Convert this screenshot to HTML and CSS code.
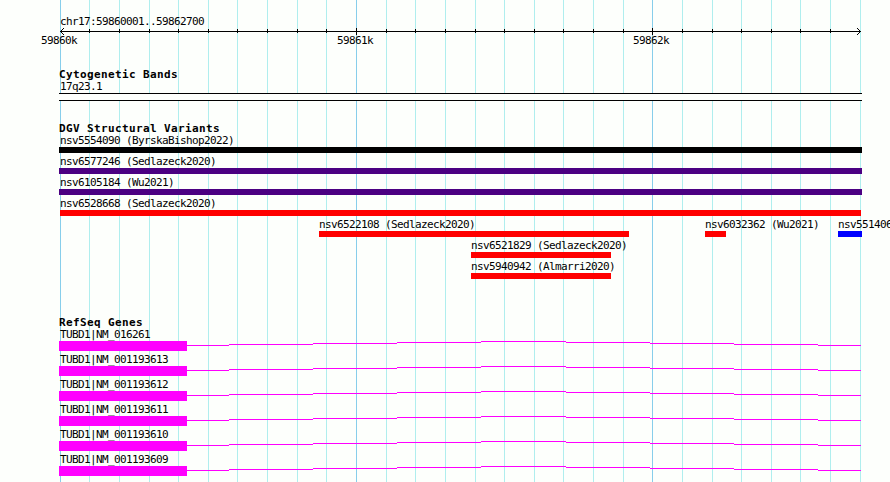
FILE: index.html
```
<!DOCTYPE html>
<html>
<head>
  <meta charset="utf-8">
  <title>chr17:59860001..59862700</title>
  <link rel="stylesheet" href="styles.css">
</head>
<body>

<div class="browser">

  <!-- Vertical grid -->
  <svg class="gridlines" width="890" height="482" shape-rendering="crispEdges">
    <path class="minor" d="M89.5 0v482M119.5 0v482M149.5 0v482M178.5 0v482M208.5 0v482M237.5 0v482M267.5 0v482M297.5 0v482M326.5 0v482M386.5 0v482M415.5 0v482M445.5 0v482M475.5 0v482M504.5 0v482M534.5 0v482M563.5 0v482M593.5 0v482M623.5 0v482M682.5 0v482M712.5 0v482M741.5 0v482M771.5 0v482M800.5 0v482M830.5 0v482M860.5 0v482"/>
    <path class="major" d="M60.5 0v482M356.5 0v482M652.5 0v482"/>
  </svg>

  <header class="ruler">
    <div class="label">chr17:59860001..59862700</div>
    <svg class="axis" width="890" height="8" shape-rendering="crispEdges">
      <path d="M60 3.5h801M89.5 1v4M119.5 1v4M149.5 1v4M178.5 1v4M208.5 1v4M237.5 1v4M267.5 1v4M297.5 1v4M326.5 1v4M386.5 1v4M415.5 1v4M445.5 1v4M475.5 1v4M504.5 1v4M534.5 1v4M563.5 1v4M593.5 1v4M623.5 1v4M682.5 1v4M712.5 1v4M741.5 1v4M771.5 1v4M800.5 1v4M830.5 1v4M356.5 0v7M652.5 0v7"/>
      <path d="M61 2.5h1M62 1.5h1M63 .5h1M61 4.5h1M62 5.5h1M63 6.5h1M859 2.5h1M858 1.5h1M857 .5h1M859 4.5h1M858 5.5h1M857 6.5h1"/>
    </svg>
    <div class="scale">
      <span>59860k</span>
      <span>59861k</span>
      <span>59862k</span>
    </div>
  </header>

  <section class="track bands">
    <h2>Cytogenetic Bands</h2>
    <div class="label">17q23.1</div>
    <div class="band"></div>
  </section>

  <section class="track variants">
    <h2>DGV Structural Variants</h2>
    <div class="row">
      <div class="feature full"><div class="label">nsv5554090 (ByrskaBishop2022)</div><div class="bar black"></div></div>
    </div>
    <div class="row">
      <div class="feature full"><div class="label">nsv6577246 (Sedlazeck2020)</div><div class="bar purple"></div></div>
    </div>
    <div class="row">
      <div class="feature full"><div class="label">nsv6105184 (Wu2021)</div><div class="bar purple"></div></div>
    </div>
    <div class="row">
      <div class="feature inner"><div class="label">nsv6528668 (Sedlazeck2020)</div><div class="bar red"></div></div>
    </div>
    <div class="row">
      <div class="feature" style="margin-left: 319px; width: 310px"><div class="label">nsv6522108 (Sedlazeck2020)</div><div class="bar red"></div></div>
      <div class="feature" style="margin-left: 76px; width: 21px"><div class="label">nsv6032362 (Wu2021)</div><div class="bar red"></div></div>
      <div class="feature" style="margin-left: 112px; width: 24px"><div class="label">nsv551406</div><div class="bar blue"></div></div>
    </div>
    <div class="row">
      <div class="feature" style="margin-left: 471px; width: 140px"><div class="label">nsv6521829 (Sedlazeck2020)</div><div class="bar red"></div></div>
    </div>
    <div class="row">
      <div class="feature" style="margin-left: 471px; width: 140px"><div class="label">nsv5940942 (Almarri2020)</div><div class="bar red"></div></div>
    </div>
  </section>

  <!-- Stepped intron line, shared by all transcripts -->
  <svg class="defs" width="0" height="0">
    <path id="intron" d="M0 4.5h42M42 3.5h84M126 2.5h84M210 1.5h84M294 .5h85M379 1.5h84M463 2.5h84M547 3.5h84M631 4.5h43"/>
  </svg>

  <section class="track genes">
    <h2>RefSeq Genes</h2>
    <div class="gene">
      <div class="label">TUBD1|NM_016261</div>
      <div class="model"><div class="exon"></div><svg class="intron" width="674" height="10"><use href="#intron"/></svg></div>
    </div>
    <div class="gene">
      <div class="label">TUBD1|NM_001193613</div>
      <div class="model"><div class="exon"></div><svg class="intron" width="674" height="10"><use href="#intron"/></svg></div>
    </div>
    <div class="gene">
      <div class="label">TUBD1|NM_001193612</div>
      <div class="model"><div class="exon"></div><svg class="intron" width="674" height="10"><use href="#intron"/></svg></div>
    </div>
    <div class="gene">
      <div class="label">TUBD1|NM_001193611</div>
      <div class="model"><div class="exon"></div><svg class="intron" width="674" height="10"><use href="#intron"/></svg></div>
    </div>
    <div class="gene">
      <div class="label">TUBD1|NM_001193610</div>
      <div class="model"><div class="exon"></div><svg class="intron" width="674" height="10"><use href="#intron"/></svg></div>
    </div>
    <div class="gene">
      <div class="label">TUBD1|NM_001193609</div>
      <div class="model"><div class="exon"></div><svg class="intron" width="674" height="10"><use href="#intron"/></svg></div>
    </div>
  </section>

</div>

</body>
</html>
```
FILE: styles.css
```
body {
  margin: 0;
  background: #fdfffc;
  color: #000;
  font-family: "DejaVu Sans Mono", "Liberation Mono", monospace;
  font-size: 11px;
  letter-spacing: -0.62px;
}

.browser {
  position: relative;
  width: 890px;
  height: 482px;
  overflow: hidden;
}

/* Grid sits behind every track */
.gridlines {
  position: absolute;
  top: 0;
  left: 0;
  z-index: -1;
}

.minor {
  stroke: #afeeee;
}

.major {
  stroke: #87ceeb;
}

.label {
  height: 14px;
  line-height: 16px;
  white-space: pre;
}

/* Ruler */
.ruler {
  height: 67px;
  padding-top: 14px;
  box-sizing: border-box;
}

.ruler .label {
  padding-left: 60px;
}

.axis {
  display: block;
  stroke: #000;
}

.scale {
  display: flex;
  gap: 260px;
  padding-left: 41px;
  line-height: 10px;
}

.scale span {
  width: 36px;
}

/* Tracks */
.track h2 {
  margin: 0;
  padding-left: 59px;
  height: 13px;
  line-height: 15px;
  font-size: 11px;
  font-weight: bold;
  letter-spacing: 0.38px;
}

.bands {
  height: 54px;
}

.bands .label {
  padding-left: 60px;
  height: 13px;
  line-height: 14px;
}

.band {
  width: 803px;
  height: 8px;
  margin-left: 59px;
  box-sizing: border-box;
  border-top: 1px solid #000;
  border-bottom: 1px solid #000;
  background: #fdfffc;
}

.variants {
  height: 194px;
}

.variants h2 {
  height: 12px;
}

.row {
  display: flex;
  height: 21px;
}

.full {
  width: 803px;
  margin-left: 59px;
}

.full .label {
  padding-left: 1px;
}

.inner {
  width: 801px;
  margin-left: 60px;
}

.bar {
  height: 6px;
}

.black {
  background: #000;
}

.purple {
  background: #4b0082;
}

.red {
  background: #f00;
}

.blue {
  background: #00f;
}

/* Genes */
.gene {
  height: 25px;
  padding-left: 59px;
}

.gene .label {
  padding-left: 1px;
  height: 13px;
  line-height: 14px;
}

.model {
  display: flex;
}

.exon {
  width: 128px;
  height: 10px;
  background: #f0f;
}

.intron {
  stroke: #f0f;
  shape-rendering: crispEdges;
}

.defs {
  position: absolute;
}
```
